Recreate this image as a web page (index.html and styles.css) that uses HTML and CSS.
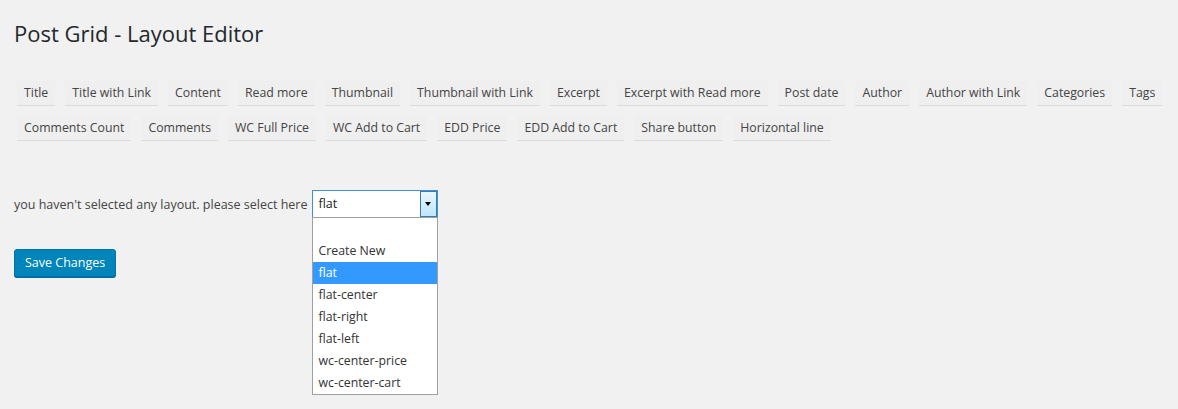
FILE: index.html
```html
<!DOCTYPE html>
<html lang="en">
<head>
  <meta charset="UTF-8" />
  <title>Post Grid - Layout Editor</title>
  <link rel="stylesheet" href="styles.css">
</head>
<body>
  <div class="wrap">
    <h2>Post Grid - Layout Editor</h2>

    <div class="elements">
      <span class="element">Title</span>
      <span class="element">Title with Link</span>
      <span class="element">Content</span>
      <span class="element">Read more</span>
      <span class="element">Thumbnail</span>
      <span class="element">Thumbnail with Link</span>
      <span class="element">Excerpt</span>
      <span class="element">Excerpt with Read more</span>
      <span class="element">Post date</span>
      <span class="element">Author</span>
      <span class="element">Author with Link</span>
      <span class="element">Categories</span>
      <span class="element">Tags</span>
      <span class="element">Comments Count</span>
      <span class="element">Comments</span>
      <span class="element">WC Full Price</span>
      <span class="element">WC Add to Cart</span>
      <span class="element">EDD Price</span>
      <span class="element">EDD Add to Cart</span>
      <span class="element">Share button</span>
      <span class="element">Horizontal line</span>
    </div>

    <div class="layout-select">
      <span>you haven't selected any layout. please select here</span>
      <div class="select">
        <div class="select-value">flat</div>
        <div class="select-arrow"></div>
        <ul class="select-list">
          <li>&nbsp;</li>
          <li>Create New</li>
          <li class="active">flat</li>
          <li>flat-center</li>
          <li>flat-right</li>
          <li>flat-left</li>
          <li>wc-center-price</li>
          <li>wc-center-cart</li>
        </ul>
      </div>
    </div>

    <button class="button-primary">Save Changes</button>
  </div>
</body>
</html>
```

FILE: styles.css
```css
html {
  background: #f1f1f1;
}
body {
  margin: 0;
  min-height: 409px;
  background: #f1f1f1;
  color: #444;
  font-family: "Segoe UI", "Open Sans", sans-serif;
  font-size: 13px;
}
.wrap {
  padding: 0 14px;
}
h2 {
  margin: 0;
  padding-top: 19px;
  font-size: 22px;
  font-weight: 400;
  line-height: 29px;
  color: #23282d;
}
.elements {
  display: flex;
  flex-wrap: wrap;
  gap: 10px 10px;
  margin-top: 33px;
  padding-left: 3px;
  max-width: 1160px;
}
.element {
  display: inline-block;
  padding: 0 7px;
  height: 24px;
  line-height: 24px;
  background: #efefef;
  border-bottom: 1px solid #dcdcdc;
  font-size: 12.3px;
  color: #444;
}
.layout-select {
  display: flex;
  align-items: center;
  gap: 4px;
  margin-top: 49px;
  font-size: 12.5px;
}
.select {
  position: relative;
  width: 124px;
  height: 26px;
  background: #fff;
  border: 1px solid #3d8fe0;
}
.select-value {
  padding: 0 6px;
  line-height: 25px;
  font-size: 12.5px;
  color: #222;
}
.select-arrow {
  position: absolute;
  top: 0;
  right: 0;
  width: 17px;
  height: 26px;
  border: 1px solid #3d7bad;
  box-sizing: border-box;
  background: linear-gradient(#eaf6fd, #bee6fd);
}
.select-arrow::after {
  content: "";
  position: absolute;
  left: 4px;
  top: 10px;
  border-left: 3.5px solid transparent;
  border-right: 3.5px solid transparent;
  border-top: 4px solid #000;
}
.select-list {
  position: absolute;
  z-index: 2;
  top: 26px;
  left: -1px;
  width: 124px;
  margin: 0;
  padding: 0;
  list-style: none;
  background: #fff;
  border: 1px solid #a0a0a0;
}
.select-list li {
  height: 22px;
  line-height: 22px;
  padding: 0 6px;
  font-size: 12.3px;
  color: #333;
}
.select-list li.active {
  background: #3399ff;
  color: #fff;
}
.button-primary {
  display: block;
  margin-top: 31px;
  height: 28px;
  padding: 0 10px;
  background: #0085ba;
  border: 1px solid #0073aa;
  border-radius: 3px;
  box-shadow: 0 1px 0 #006799;
  color: #fff;
  font-family: inherit;
  font-size: 12.5px;
  line-height: 26px;
}
```
